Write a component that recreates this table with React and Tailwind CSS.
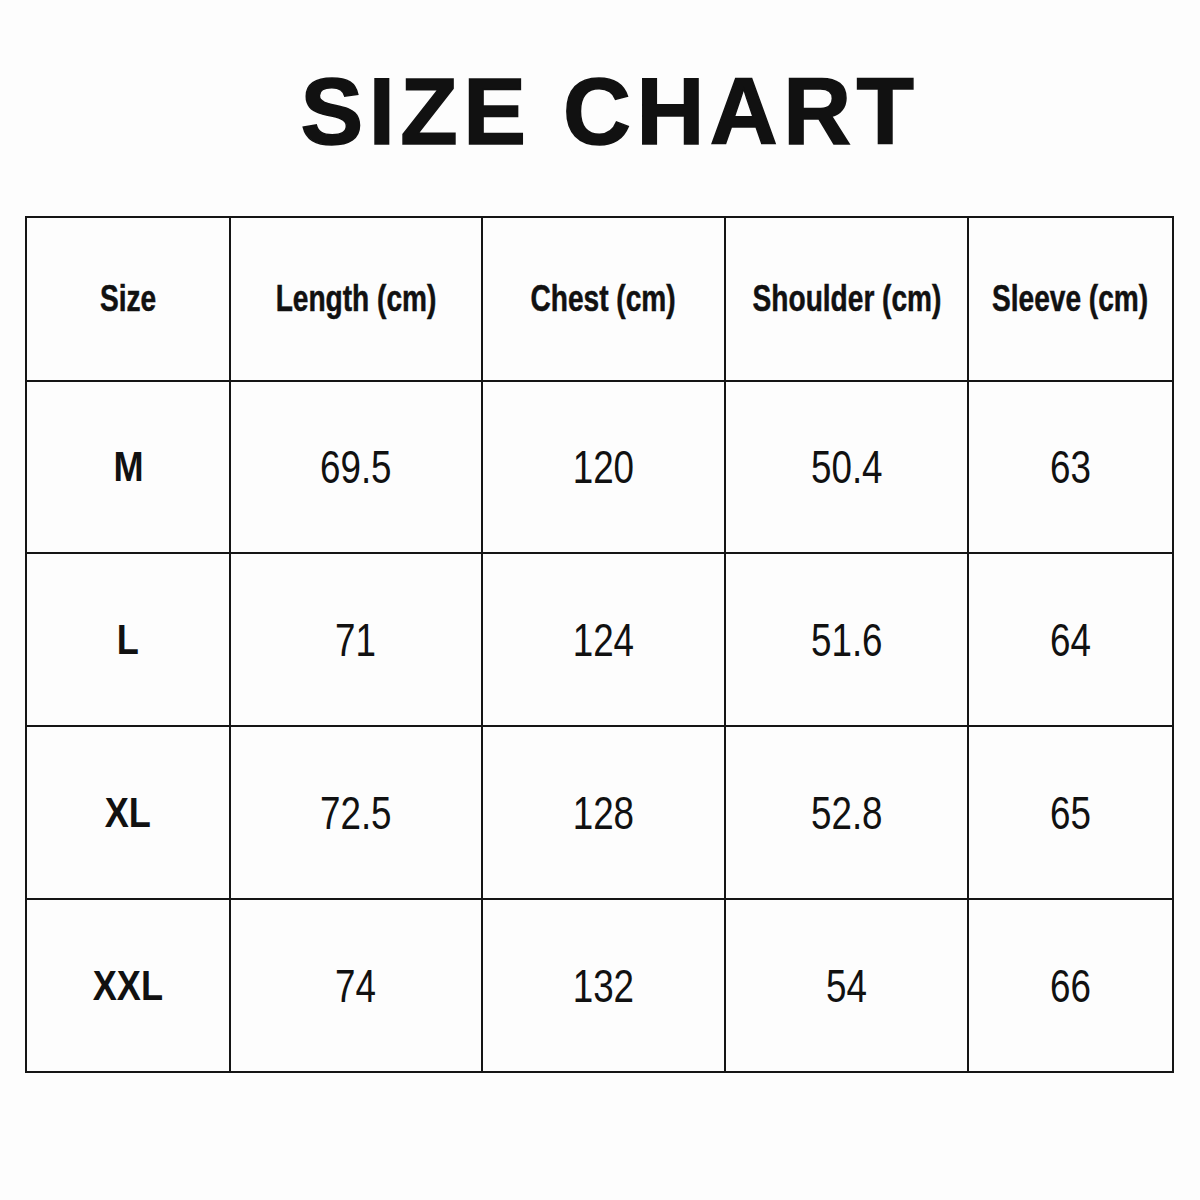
import React from "react";

const headers = ["Size", "Length (cm)", "Chest (cm)", "Shoulder (cm)", "Sleeve (cm)"];
const rows = [
  ["M", "69.5", "120", "50.4", "63"],
  ["L", "71", "124", "51.6", "64"],
  ["XL", "72.5", "128", "52.8", "65"],
  ["XXL", "74", "132", "54", "66"],
];

function Cell({ children }) {
  return (
    <div className="border-r-2 border-b-2 border-[#151515] flex items-center justify-center overflow-visible">
      {children}
    </div>
  );
}

export default function App() {
  return (
    <div className="w-[1200px] h-[1200px] bg-[#fdfdfd] flex flex-col text-[#111111] font-['Liberation_Sans',Arial,sans-serif]">
      <div className="h-[216px] pt-[8px] flex items-center justify-center">
        <h1 className="pl-[20px] text-[94px] font-bold leading-none tracking-[5.5px] text-[#111111] [-webkit-text-stroke:1.5px_#111111]">
          SIZE CHART
        </h1>
      </div>
      <div className="ml-[25px] w-fit grid grid-cols-[204px_252px_243px_243px_205px] grid-rows-[164px_172px_173px_173px_173px] border-t-2 border-l-2 border-[#151515]">
        {headers.map((h) => (
          <Cell key={h}>
            <span className="inline-block whitespace-nowrap text-[36px] font-bold leading-none scale-x-[0.78] [-webkit-text-stroke:0.5px_#111111]">
              {h}
            </span>
          </Cell>
        ))}
        {rows.map((r) => (
          <React.Fragment key={r[0]}>
            <Cell>
              <span className="inline-block whitespace-nowrap text-[42px] font-bold leading-none scale-x-[0.86]">
                {r[0]}
              </span>
            </Cell>
            {r.slice(1).map((v, i) => (
              <Cell key={i}>
                <span className="inline-block whitespace-nowrap text-[46px] font-normal leading-none scale-x-[0.8]">
                  {v}
                </span>
              </Cell>
            ))}
          </React.Fragment>
        ))}
      </div>
    </div>
  );
}
